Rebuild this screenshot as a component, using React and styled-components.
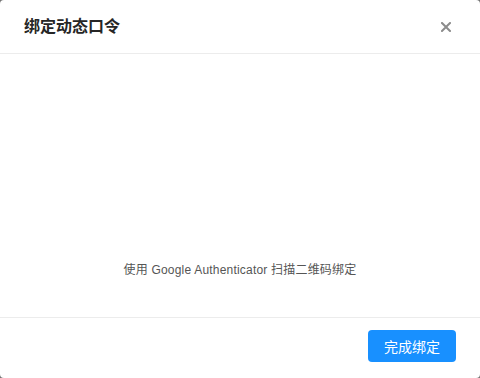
import React from "react";
import styled, { createGlobalStyle } from "styled-components";

const Global = createGlobalStyle`
  html, body { margin: 0; padding: 0; background: #737373; }
  body { font-family: "Liberation Sans", "Noto Sans CJK SC", sans-serif; }
  #root { width: 480px; height: 378px; }
`;

const Modal = styled.div`
  width: 480px;
  height: 378px;
  background: #fff;
  border-radius: 4px;
  display: flex;
  flex-direction: column;
  box-sizing: border-box;
  overflow: hidden;
`;

const Header = styled.div`
  display: flex;
  align-items: center;
  justify-content: space-between;
  height: 54px;
  padding: 0 24px;
  border-bottom: 1px solid #ececec;
  box-sizing: border-box;
`;

const Title = styled.div`
  font-size: 16px;
  font-weight: 700;
  color: #262626;
  line-height: 22px;
`;

const Close = styled.button`
  border: 0;
  background: none;
  padding: 0;
  width: 16px;
  height: 16px;
  display: flex;
  align-items: center;
  justify-content: center;
  margin-right: 2px;
  cursor: pointer;
`;

const Body = styled.div`
  flex: 1;
  display: flex;
  flex-direction: column;
  align-items: center;
  justify-content: flex-end;
  padding-bottom: 38px;
  box-sizing: border-box;
`;

const Hint = styled.div`
  font-size: 12px;
  letter-spacing: 0.2px;
  color: #555;
  line-height: 18px;
`;

const Footer = styled.div`
  display: flex;
  justify-content: flex-end;
  padding: 12px 24px 16px;
  border-top: 1px solid #ececec;
`;

const Primary = styled.button`
  width: 88px;
  height: 32px;
  border: 0;
  border-radius: 4px;
  background: #1890ff;
  color: #fff;
  font-size: 14px;
  font-family: inherit;
  cursor: pointer;
`;

export default function App() {
  return (
    <>
      <Global />
      <Modal>
        <Header>
          <Title>绑定动态口令</Title>
          <Close aria-label="close">
            <svg width="10" height="10" viewBox="0 0 10 10">
              <path d="M1 1L9 9M9 1L1 9" stroke="#8c8c8c" strokeWidth="2" strokeLinecap="square" />
            </svg>
          </Close>
        </Header>
        <Body>
          <Hint>使用 Google Authenticator 扫描二维码绑定</Hint>
        </Body>
        <Footer>
          <Primary>完成绑定</Primary>
        </Footer>
      </Modal>
    </>
  );
}
